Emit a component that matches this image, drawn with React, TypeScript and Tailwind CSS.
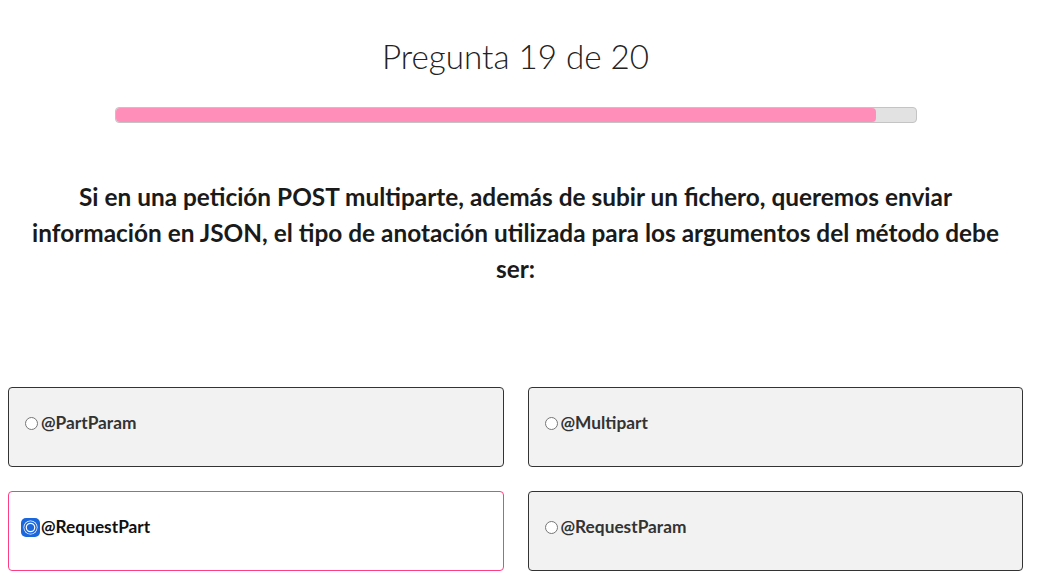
import React from "react";

const options = [
  { label: "@PartParam", checked: false },
  { label: "@Multipart", checked: false },
  { label: "@RequestPart", checked: true },
  { label: "@RequestParam", checked: false },
];

function Radio({ checked }: { checked: boolean }) {
  if (checked) {
    return (
      <svg width="19" height="19" viewBox="0 0 19 19" className="shrink-0 -ml-[4px] -mr-[2px]">
        <rect x="0" y="0" width="19" height="19" rx="5" fill="#1a66dc" />
        <circle cx="9.5" cy="9.5" r="7" fill="#ffffff" />
        <circle cx="9.5" cy="9.5" r="6.3" fill="#1a66dc" />
        <circle cx="9.5" cy="9.5" r="4.8" fill="#ffffff" />
        <circle cx="9.5" cy="9.5" r="3.6" fill="#1a66dc" />
      </svg>
    );
  }
  return (
    <span className="shrink-0 w-[13px] h-[13px] rounded-full border border-[#767676] bg-white" />
  );
}

export default function App() {
  return (
    <div
      className="w-[1015px] ml-[8px] bg-white text-[#222]"
      style={{ fontFamily: "Lato, 'Open Sans', sans-serif" }}
    >
      <h1 className="text-center text-[33.2px] font-light leading-[40px] pt-[36px] text-[#222]">
        Pregunta 19 de 20
      </h1>
      <div className="flex justify-center mt-[31px]">
        <div className="w-[802px] h-[16px] rounded-[4px] border border-[#c4c4c4] bg-[#e2e2e2] overflow-hidden">
          <div className="h-full w-[95%] bg-[#ff8fb8] rounded-[4px]" />
        </div>
      </div>
      <p className="mt-[56px] px-[16px] text-center text-[24.4px] font-bold leading-[36px] text-[#1a1a1a]">
        Si en una petición POST multiparte, además de subir un fichero, queremos enviar información en JSON, el tipo de anotación utilizada para los argumentos del método debe ser:
      </p>
      <div className="grid grid-cols-2 gap-x-[24px] gap-y-[24px] mt-[100px]">
        {options.map((o) => (
          <div
            key={o.label}
            className={
              o.checked
                ? "h-[80px] rounded-[4px] border border-[#ff3d84] bg-white flex items-center gap-[3px] pl-[16px] pb-[8px]"
                : "h-[80px] rounded-[4px] border border-[#333] bg-[#f2f2f2] flex items-center gap-[3px] pl-[16px] pb-[8px]"
            }
          >
            <Radio checked={o.checked} />
            <span
              className={
                o.checked
                  ? "text-[17.3px] font-bold text-[#111]"
                  : "text-[17.3px] font-bold text-[#333]"
              }
            >
              {o.label}
            </span>
          </div>
        ))}
      </div>
    </div>
  );
}
